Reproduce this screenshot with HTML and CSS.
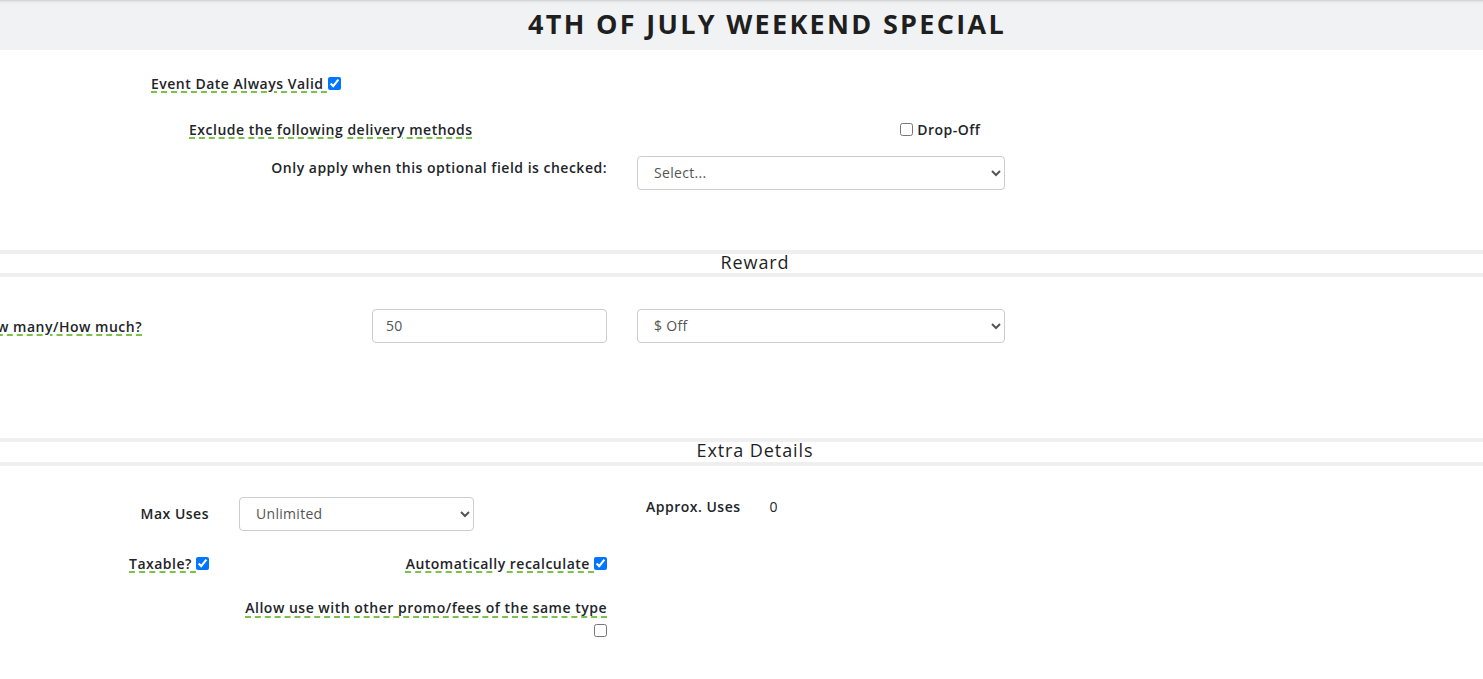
FILE: index.html
```html
<!DOCTYPE html>
<html lang="en">
<head>
<meta charset="utf-8">
<title>4th of July Weekend Special</title>
<link rel="stylesheet" href="styles.css">
</head>
<body>
<header class="title-bar">
  <h1 class="title">4TH OF JULY WEEKEND SPECIAL</h1>
</header>

<main class="form">
  <section class="block">
    <div class="row row-event">
      <label class="hint">Event Date Always Valid </label><input type="checkbox" class="check" checked>
    </div>
    <div class="row row-exclude">
      <span class="hint">Exclude the following delivery methods</span>
      <label class="option"><input type="checkbox" class="check"> Drop-Off</label>
    </div>
    <div class="row row-field">
      <span class="label">Only apply when this optional field is checked:</span>
      <select class="control control-wide">
        <option>Select...</option>
      </select>
    </div>
  </section>

  <div class="section-title section-reward">Reward</div>

  <section class="block">
    <div class="row row-amount">
      <div class="amount-label"><span class="hint">How many/How much?</span></div>
      <input type="text" class="control control-input" value="50">
      <select class="control control-wide control-off">
        <option>$ Off</option>
      </select>
    </div>
  </section>

  <div class="section-title section-extra">Extra Details</div>

  <section class="block">
    <div class="row row-max">
      <div class="max-label"><span class="label">Max Uses</span></div>
      <select class="control control-max">
        <option>Unlimited</option>
      </select>
      <span class="label approx-label">Approx. Uses</span>
      <span class="approx-value">0</span>
    </div>
    <div class="row row-tax">
      <span class="check-group"><span class="hint">Taxable? </span><input type="checkbox" class="check" checked></span>
      <span class="check-group"><span class="hint">Automatically recalculate </span><input type="checkbox" class="check" checked></span>
    </div>
    <div class="row-allow">
      <div class="allow-text"><span class="hint">Allow use with other promo/fees of the same type</span></div>
      <div class="allow-check"><input type="checkbox" class="check"></div>
    </div>
  </section>
</main>
</body>
</html>
```

FILE: styles.css
```css
html, body {
  margin: 0;
  padding: 0;
  background: #ffffff;
  overflow: hidden;
}

body {
  font-family: "Open Sans", "Liberation Sans", sans-serif;
  font-size: 14px;
  letter-spacing: 0.5px;
  color: #212529;
  width: 1483px;
  height: 679px;
}

.title-bar {
  height: 50px;
  background: linear-gradient(to bottom, #cfd0d3 0px, #e9eaec 2px, #f1f2f4 4px, #f1f2f4 100%);
  display: flex;
  align-items: center;
  justify-content: center;
  padding-left: 51px;
  box-sizing: border-box;
}

.title {
  margin: 0;
  font-size: 27px;
  font-weight: 700;
  color: #1f1f1f;
  letter-spacing: 2.3px;
  line-height: 46px;
  padding-bottom: 2px;
}

.form {
  display: block;
}

.row {
  display: flex;
  align-items: center;
}

.hint {
  font-weight: 600;
  text-decoration-line: underline;
  text-decoration-style: dashed;
  text-decoration-color: #7cc24a;
  text-decoration-thickness: 2px;
  text-underline-offset: 3px;
  white-space: pre;
}

.label {
  font-weight: 600;
  white-space: nowrap;
}

.check {
  width: 13px;
  height: 13px;
  margin: 0;
}

/* first block */
.row-event {
  height: 20px;
  margin-top: 23px;
  padding-left: 151px;
}

.row-exclude {
  height: 20px;
  margin-top: 26px;
  padding-left: 189px;
  display: grid;
  grid-template-columns: 711px auto;
  align-items: center;
}

.option {
  display: flex;
  align-items: center;
  font-weight: 600;
  white-space: pre;
}

.row-field {
  margin-top: 17px;
  display: grid;
  grid-template-columns: 607px 368px;
  column-gap: 30px;
}

.row-field .label {
  text-align: right;
  padding-bottom: 12px;
}

.control {
  box-sizing: border-box;
  height: 34px;
  border: 1px solid #cccccc;
  border-radius: 4px;
  background: #ffffff;
  font-family: "Open Sans", "Liberation Sans", sans-serif;
  font-size: 14px;
  letter-spacing: 0.3px;
  color: #555555;
  padding: 0 12px 2px;
  margin: 0;
}

.control-wide {
  width: 368px;
}

/* section titles */
.section-title {
  border-top: 4px solid #efefef;
  border-bottom: 4px solid #efefef;
  text-align: center;
  font-size: 18px;
  padding-left: 27px;
  color: #1f1f1f;
  letter-spacing: 0.9px;
  line-height: 17px;
}

.section-reward {
  margin-top: 60px;
  padding-bottom: 2px;
}

.section-extra {
  margin-top: 95px;
  padding-bottom: 3px;
}

/* reward block */
.row-amount {
  margin-top: 32px;
}

.amount-label {
  width: 142px;
  display: flex;
  justify-content: flex-end;
}

.control-input {
  width: 235px;
  margin-left: 230px;
  padding-left: 13px;
  outline: none;
}

.control-off {
  margin-left: 30px;
}

/* extra details */
.row-max {
  margin-top: 31px;
  align-items: flex-start;
}

.max-label {
  width: 209px;
  display: flex;
  justify-content: flex-end;
  line-height: 20px;
  padding-top: 7px;
}

.control-max {
  width: 235px;
  margin-left: 30px;
}

.approx-label {
  margin-left: 172px;
  line-height: 20px;
}

.approx-value {
  margin-left: 29px;
  line-height: 20px;
}

.row-tax {
  margin-top: 22px;
  height: 20px;
  width: 607px;
  padding-left: 129px;
  box-sizing: border-box;
  justify-content: space-between;
}

.check-group {
  display: flex;
  align-items: center;
}

.row-allow {
  margin-top: 25px;
  width: 607px;
}

.allow-text {
  text-align: right;
  line-height: 20px;
  height: 20px;
}

.allow-check {
  display: flex;
  justify-content: flex-end;
  align-items: center;
  height: 20px;
  margin-top: 2px;
}
```
